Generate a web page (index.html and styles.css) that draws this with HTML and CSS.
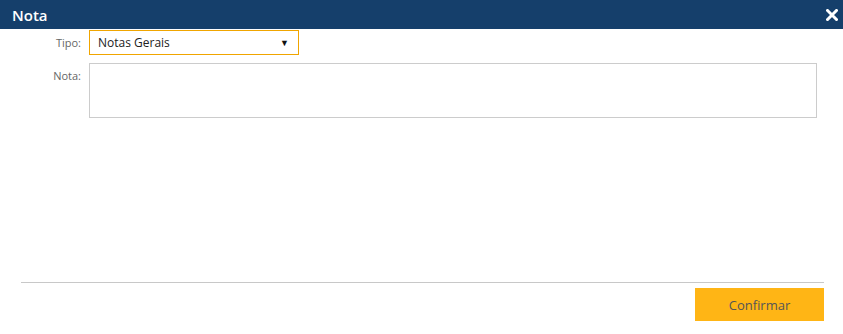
FILE: index.html
```html
<!DOCTYPE html>
<html>
<head>
<meta charset="utf-8">
<link rel="stylesheet" href="styles.css">
</head>
<body>
<div class="dialog">
  <div class="header">
    <span class="title">Nota</span>
    <span class="close">
      <svg width="12" height="12" viewBox="0 0 12 12"><path d="M1.5 1.5 L10.5 10.5 M10.5 1.5 L1.5 10.5" stroke="#fff" stroke-width="3" stroke-linecap="square"/></svg>
    </span>
  </div>
  <div class="body">
    <div class="row row-tipo">
      <label class="lbl">Tipo:</label>
      <div class="select"><span>Notas Gerais</span><span class="arrow">▼</span></div>
    </div>
    <div class="row row-nota">
      <label class="lbl lbl-top">Nota:</label>
      <div class="textarea"></div>
    </div>
  </div>
  <div class="footer">
    <div class="divider"></div>
    <div class="actions"><button class="btn">Confirmar</button></div>
  </div>
</div>
</body>
</html>
```
FILE: styles.css
```css
* { box-sizing: border-box; }
html, body { margin: 0; padding: 0; background: #fff; }
body { font-family: "Open Sans", "Noto Sans", sans-serif; width: 843px; height: 334px; overflow: hidden; }
.dialog { display: flex; flex-direction: column; height: 334px; }
.header { height: 29px; background: #153f6b; display: flex; align-items: center; justify-content: space-between; padding: 0 5px 0 12px; }
.title { color: #fff; font-weight: 600; font-size: 15px; line-height: 28px; }
.close { display: flex; align-items: center; width: 12px; height: 12px; margin-top: 1px; }
.close svg { display: block; }
.body { flex: 1; padding: 1px 26px 0 0; }
.row { display: flex; }
.lbl { width: 89px; padding-right: 8px; text-align: right; font-size: 11px; color: #666; }
.row-tipo { align-items: center; height: 25px; }
.select { width: 210px; height: 25px; border: 1px solid #f0a500; display: flex; align-items: center; justify-content: space-between; padding: 0 9px 0 8px; font-size: 12px; color: #222; }
.arrow { font-size: 9px; color: #111; }
.row-nota { margin-top: 8px; }
.lbl-top { padding-top: 5px; }
.textarea { width: 728px; height: 55px; border: 1px solid #ccc; }
.footer { padding: 0 19px 13px 21px; }
.divider { height: 1px; background: #c8c8c8; }
.actions { display: flex; justify-content: flex-end; padding-top: 5px; }
.btn { width: 129px; height: 33px; background: #ffb515; border: none; font-family: "Open Sans", "Noto Sans", sans-serif; font-size: 13px; color: #555; padding: 0; }
```
